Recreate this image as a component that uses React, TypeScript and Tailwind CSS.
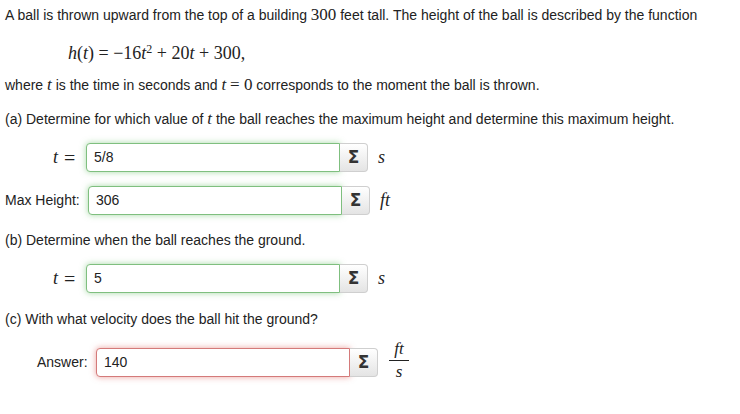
const serif = "font-['Liberation_Serif','DejaVu_Serif',serif]";

function M({ children, i = false }: { children: React.ReactNode; i?: boolean }) {
  return (
    <span className={`${serif} text-[17px] ${i ? "italic" : ""}`}>{children}</span>
  );
}

function AnswerBox({
  value,
  state,
}: {
  value: string;
  state: "ok" | "bad";
}) {
  const box =
    state === "ok"
      ? "border-[#7fbf7f] shadow-[0_0_6px_rgba(92,184,92,0.55)]"
      : "border-[#d47a7a] shadow-[0_0_6px_rgba(217,83,79,0.55)]";
  return (
    <div className="flex h-[29px]">
      <div
        className={`w-[254px] h-full border rounded-l-[4px] bg-white flex items-center pl-[7px] text-[14px] text-[#222] ${box}`}
      >
        {value}
      </div>
      <div className="w-[28px] h-full border border-l-0 border-[#cfcfcf] rounded-r-[4px] bg-gradient-to-b from-white to-[#e4e4e4] flex items-center justify-center">
        <span className="font-['DejaVu_Sans',sans-serif] font-bold text-[17px] text-[#333] leading-none">
          Σ
        </span>
      </div>
    </div>
  );
}

function Unit({ children }: { children: React.ReactNode }) {
  return (
    <span className={`${serif} italic text-[18px] ml-[10px] text-[#222]`}>
      {children}
    </span>
  );
}

function TEq() {
  return (
    <span className={`${serif} text-[18px] flex items-center gap-[6px]`}>
      <i>t</i>
      <span className="text-[20px] leading-none">=</span>
    </span>
  );
}

export default function App() {
  return (
    <div className="w-[740px] h-[414px] bg-white text-[#222] font-['Liberation_Sans',Arial,sans-serif] text-[14px] pl-[5px]">
      <p className="pt-[6px] leading-[18px]">
        A ball is thrown upward from the top of a building <M>300</M> feet tall. The
        height of the ball is described by the function
      </p>
      <div className={`${serif} text-[18px] ml-[63px] mt-[19px] leading-[20px]`}>
        <i>h</i>(<i>t</i>) = −16<i>t</i>
        <sup className="text-[12px]">2</sup> + 20<i>t</i> + 300,
      </div>
      <p className="mt-[13px] leading-[18px]">
        where <M i>t</M> is the time in seconds and <M i>t</M> <M>= 0</M> corresponds
        to the moment the ball is thrown.
      </p>
      <p className="mt-[16px] leading-[18px]">
        (a) Determine for which value of <M i>t</M> the ball reaches the maximum height
        and determine this maximum height.
      </p>

      <div className="flex items-center mt-[15px]">
        <span className="ml-[48px] w-[33px]">
          <TEq />
        </span>
        <AnswerBox value="5/8" state="ok" />
        <Unit>s</Unit>
      </div>

      <div className="flex items-center mt-[14px]">
        <span className="w-[83px]">Max Height:</span>
        <AnswerBox value="306" state="ok" />
        <Unit>ft</Unit>
      </div>

      <p className="mt-[16px] leading-[18px]">(b) Determine when the ball reaches the ground.</p>

      <div className="flex items-center mt-[15px]">
        <span className="ml-[48px] w-[33px]">
          <TEq />
        </span>
        <AnswerBox value="5" state="ok" />
        <Unit>s</Unit>
      </div>

      <p className="mt-[17px] leading-[18px]">(c) With what velocity does the ball hit the ground?</p>

      <div className="flex items-center mt-[17px]">
        <span className="ml-[32px] w-[59px]">Answer:</span>
        <AnswerBox value="140" state="bad" />
        <span className={`${serif} italic text-[17px] ml-[11px] flex flex-col items-center leading-[16px] -mt-[4px]`}>
          <span className="px-[1px]">ft</span>
          <span className="block w-[20px] h-[1px] bg-[#222] my-[3px]" />
          <span>s</span>
        </span>
      </div>
    </div>
  );
}
